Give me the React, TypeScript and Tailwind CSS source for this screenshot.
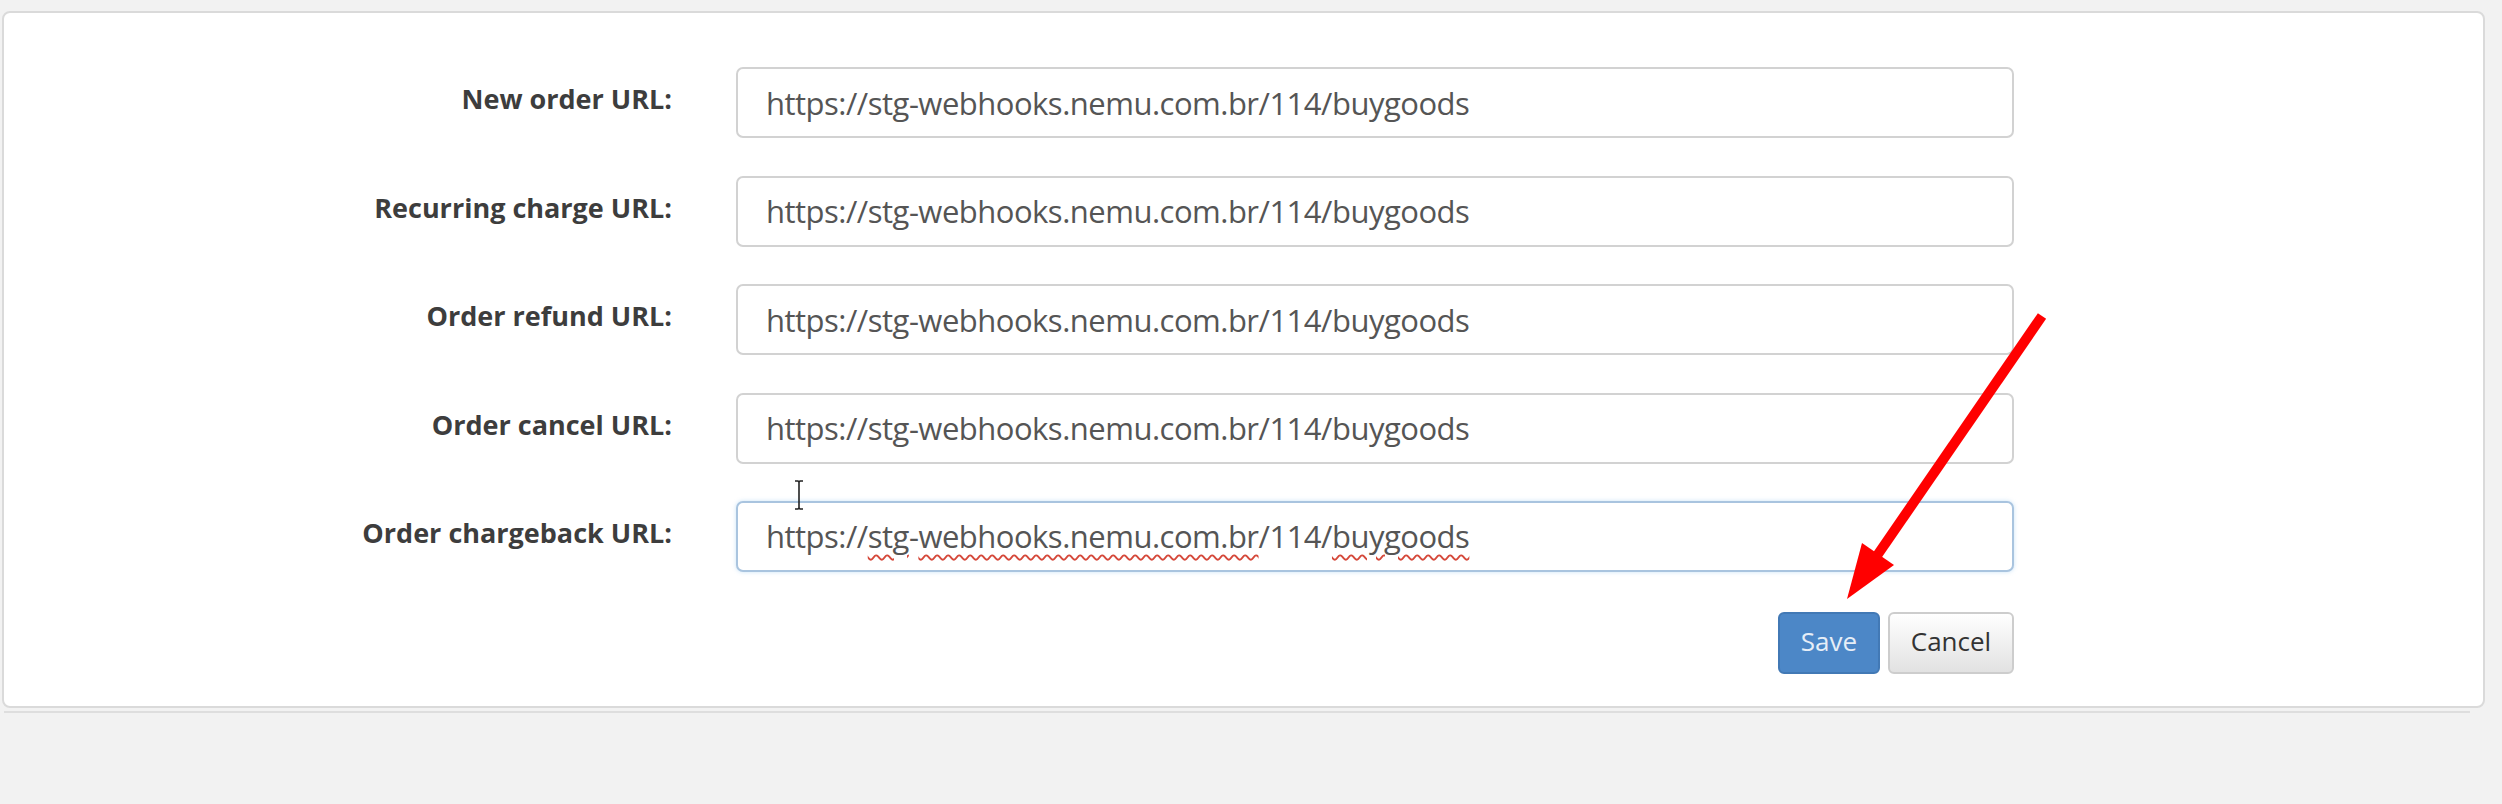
import React from "react";

const URL = "https://stg-webhooks.nemu.com.br/114/buygoods";

const fields = [
  "New order URL:",
  "Recurring charge URL:",
  "Order refund URL:",
  "Order cancel URL:",
];

const Squiggle: React.FC<{ children: React.ReactNode }> = ({ children }) => (
  <span className="underline decoration-wavy decoration-[#d5483a] decoration-[1.5px] underline-offset-[6px]">
    {children}
  </span>
);

const App: React.FC = () => {
  return (
    <div
      className="relative min-h-screen w-full bg-[#f2f2f2] pt-[11px] pl-[2px] pr-[17px]"
      style={{ fontFamily: '"Open Sans", "Liberation Sans", sans-serif' }}
    >
      {/* Webhooks panel */}
      <div className="h-[697px] rounded-[8px] border-2 border-[#dadada] bg-white pt-[54px]">
        <div className="grid grid-cols-[668px_1278px] gap-x-[64px] gap-y-[37.5px]">
          {fields.map((label) => (
            <React.Fragment key={label}>
              <label className="flex h-[71px] items-center justify-end pb-[6px] text-[27px] font-bold text-[#3d3d3d]">
                {label}
              </label>
              <input
                type="text"
                defaultValue={URL}
                className="h-[71px] w-full rounded-[7px] border-2 border-[#d2d2d2] bg-white pl-[28px] text-[31px] tracking-[-0.5px] text-[#555] outline-none"
              />
            </React.Fragment>
          ))}

          <label className="flex h-[71px] items-center justify-end pb-[6px] text-[27px] font-bold text-[#3d3d3d]">
            Order chargeback URL:
          </label>
          {/* focused field, with spellcheck marks */}
          <div className="flex h-[71px] w-full items-center rounded-[7px] border-2 border-[#a9c4df] bg-white pl-[28px] text-[31px] tracking-[-0.5px] text-[#555] shadow-[0_0_4px_rgba(102,175,233,0.35)]">
            <span>
              https://<Squiggle>stg</Squiggle>-<Squiggle>webhooks.nemu.com.br</Squiggle>/114/
              <Squiggle>buygoods</Squiggle>
            </span>
          </div>

          <div />
          <div className="mt-[2.5px] flex justify-end gap-[8px]">
            <button className="h-[62px] w-[102px] rounded-[6px] border-2 border-[#4279b5] bg-[#4c87c7] pb-[3px] text-[26px] text-[#e6eef7]">
              Save
            </button>
            <button className="h-[62px] w-[126px] rounded-[6px] border-2 border-[#cdcdcd] bg-linear-to-b from-white to-[#e2e2e2] pb-[3px] text-[26px] text-[#333]">
              Cancel
            </button>
          </div>
        </div>
      </div>
      <div className="ml-[2px] mr-[15px] mt-[3px] h-[2px] bg-[#dedede]" />

      {/* text cursor */}
      <svg
        className="absolute left-[793px] top-[480px]"
        width="12"
        height="30"
        viewBox="0 0 12 30"
      >
        <path d="M2 1h3l1 1 1-1h3M6 2v26M2 29h3l1-1 1 1h3" stroke="#222" strokeWidth="1.6" fill="none" />
      </svg>

      {/* annotation arrow */}
      <svg
        className="absolute left-[1830px] top-[300px]"
        width="230"
        height="310"
        viewBox="1830 300 230 310"
      >
        <line x1="2042" y1="316" x2="1874" y2="560" stroke="#ff0000" strokeWidth="10" />
        <polygon points="1847,599 1862,543 1894,565" fill="#ff0000" />
      </svg>
    </div>
  );
};

export default App;
